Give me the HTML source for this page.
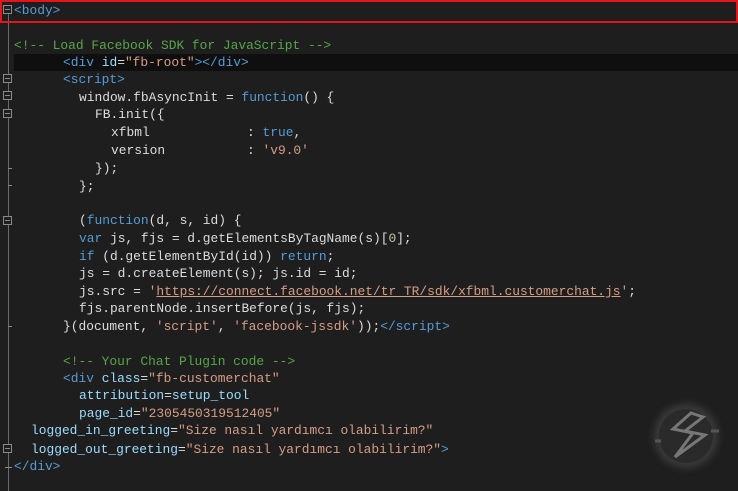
<!DOCTYPE html>
<html><head><meta charset="utf-8"><style>
html,body{margin:0;padding:0}
body{width:738px;height:491px;background:#1e1e1e;position:relative;overflow:hidden;font-family:"Liberation Mono","DejaVu Sans Mono",monospace;font-size:12.9px;color:#dcdcdc}
.l{position:absolute;white-space:pre;line-height:17px;height:17px}
.t{color:#569cd6}.a{color:#9cdcfe}.s{color:#d69d85}.c{color:#57a64a}.k{color:#569cd6}.n{color:#b5cea8}
.u{text-decoration:underline}
.fold{position:absolute;left:3px;width:7px;height:7px;border:1px solid #8a8a8a;background:#1e1e1e}
.fold:after{content:"";position:absolute;left:1px;right:1px;top:3px;height:1px;background:#8a8a8a}
.tick{position:absolute;left:8px;width:4px;height:1px;background:#8a8a8a}
</style></head><body>
<div style="position:absolute;left:8px;top:12px;width:1px;height:479px;background:#6a6a6a"></div>
<div style="position:absolute;left:14px;top:54px;width:724px;height:17px;background:#0f0f0f"></div>
<div style="position:absolute;left:0;top:0;width:734px;height:19px;border:2px solid #e8141c"></div>

<div class="fold" style="top:5px"></div>
<div class="fold" style="top:74px"></div>
<div class="fold" style="top:91px"></div>
<div class="fold" style="top:109px"></div>
<div class="fold" style="top:216px"></div>
<div class="fold" style="top:444px"></div>
<div class="tick" style="top:168px"></div>
<div class="tick" style="top:185px"></div>
<div class="tick" style="top:326px"></div>
<div class="tick" style="top:467px;left:5px;width:7px"></div>

<div class="l" style="left:14px;top:2px"><span class="t">&lt;body&gt;</span></div>
<div class="l" style="left:14px;top:37px"><span class="c">&lt;!-- Load Facebook SDK for JavaScript --&gt;</span></div>
<div class="l" style="left:63px;top:54px"><span class="t">&lt;div</span> <span class="a">id</span>=<span class="s">"fb-root"</span><span class="t">&gt;&lt;/div&gt;</span></div>
<div class="l" style="left:63px;top:71px"><span class="t">&lt;script&gt;</span></div>
<div class="l" style="left:79px;top:89px">window.fbAsyncInit = <span class="k">function</span>() {</div>
<div class="l" style="left:95px;top:106px">FB.init({</div>
<div class="l" style="left:111px;top:124px">xfbml</div><div class="l" style="left:247px;top:124px">: <span class="k">true</span>,</div>
<div class="l" style="left:111px;top:142px">version</div><div class="l" style="left:247px;top:142px">: <span class="s">'v9.0'</span></div>
<div class="l" style="left:95px;top:160px">});</div>
<div class="l" style="left:79px;top:178px">};</div>
<div class="l" style="left:79px;top:212px">(<span class="k">function</span>(d, s, id) {</div>
<div class="l" style="left:79px;top:230px"><span class="k">var</span> js, fjs = d.getElementsByTagName(s)[<span class="n">0</span>];</div>
<div class="l" style="left:79px;top:248px"><span class="k">if</span> (d.getElementById(id)) <span class="k">return</span>;</div>
<div class="l" style="left:79px;top:265px">js = d.createElement(s); js.id = id;</div>
<div class="l" style="left:79px;top:283px">js.src = <span class="s">'<span class="u">https://connect.facebook.net/tr_TR/sdk/xfbml.customerchat.js</span>'</span>;</div>
<div class="l" style="left:79px;top:300px">fjs.parentNode.insertBefore(js, fjs);</div>
<div class="l" style="left:63px;top:318px">}(document, <span class="s">'script'</span>, <span class="s">'facebook-jssdk'</span>));<span class="t">&lt;/script&gt;</span></div>
<div class="l" style="left:63px;top:353px"><span class="c">&lt;!-- Your Chat Plugin code --&gt;</span></div>
<div class="l" style="left:63px;top:370px"><span class="t">&lt;div</span> <span class="a">class</span>=<span class="s">"fb-customerchat"</span></div>
<div class="l" style="left:79px;top:387px"><span class="a">attribution</span>=<span class="a">setup_tool</span></div>
<div class="l" style="left:79px;top:405px"><span class="a">page_id</span>=<span class="s">"2305450319512405"</span></div>
<div class="l" style="left:31px;top:422px"><span class="a">logged_in_greeting</span>=<span class="s">"Size nasıl yardımcı olabilirim?"</span></div>
<div class="l" style="left:31px;top:441px"><span class="a">logged_out_greeting</span>=<span class="s">"Size nasıl yardımcı olabilirim?"</span><span class="t">&gt;</span></div>
<div class="l" style="left:14px;top:458px"><span class="t">&lt;/div&gt;</span></div>

<svg style="position:absolute;left:645px;top:395px" width="82" height="82" viewBox="0 0 82 82">
<defs><filter id="b"><feGaussianBlur stdDeviation="4"/></filter></defs>
<circle cx="41" cy="41" r="32" fill="#3a3a3a" filter="url(#b)"/>
<circle cx="41" cy="41" r="27" fill="#2a2a2a"/>
<path d="M46 18 L28 34 L48 38 L30 62 L60 40 L40 36 L58 22 Z" fill="none" stroke="#777" stroke-width="3"/>
<path d="M10 46 L16 46 M66 36 L74 36" stroke="#555" stroke-width="3"/>
</svg>
</body></html>
